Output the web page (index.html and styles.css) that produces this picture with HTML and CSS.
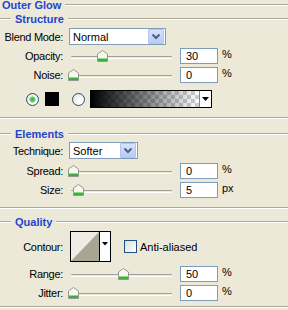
FILE: index.html
```html
<!DOCTYPE html>
<html>

<head>
    <title>Outer Glow</title>
    <link rel="stylesheet" href="styles.css">
</head>

<body>
    <div class="group top">
        <span class="caption">Outer Glow</span>
        <span class="rule"></span>
    </div>

    <!-- Structure -->
    <div class="group" id="structure">
        <span class="lead"></span>
        <span class="caption">Structure</span>
        <span class="rule"></span>
    </div>
    <div class="row" id="blend-row">
        <span class="label">Blend Mode:</span>
        <div class="select wide">
            <span class="value">Normal</span>
            <span class="drop"><svg width="14" height="13"><polyline points="3.5,4.5 7,8 10.5,4.5" fill="none" stroke="#4d6185" stroke-width="2" /></svg></span>
        </div>
    </div>
    <div class="row" id="opacity-row">
        <span class="label">Opacity:</span>
        <div class="slider"><span class="thumb" style="left: 29px"></span></div>
        <span class="field">30</span>
        <span class="unit">%</span>
    </div>
    <div class="row" id="noise-row">
        <span class="label">Noise:</span>
        <div class="slider"><span class="thumb" style="left: 0px"></span></div>
        <span class="field">0</span>
        <span class="unit">%</span>
    </div>
    <div class="row" id="color-row">
        <span class="radio checked"></span>
        <span class="swatch"></span>
        <span class="radio" id="radio-gradient"></span>
        <div class="gradient">
            <span class="ramp"></span>
            <span class="arrow"><svg width="11" height="16"><polygon points="2,6 9,6 5.5,10" fill="#000" /></svg></span>
        </div>
    </div>
    <div class="sep" id="sep-1"></div>

    <!-- Elements -->
    <div class="group" id="elements">
        <span class="lead"></span>
        <span class="caption">Elements</span>
        <span class="rule"></span>
    </div>
    <div class="row" id="technique-row">
        <span class="label">Technique:</span>
        <div class="select narrow">
            <span class="value">Softer</span>
            <span class="drop"><svg width="14" height="13"><polyline points="3.5,4.5 7,8 10.5,4.5" fill="none" stroke="#4d6185" stroke-width="2" /></svg></span>
        </div>
    </div>
    <div class="row" id="spread-row">
        <span class="label">Spread:</span>
        <div class="slider"><span class="thumb" style="left: 0px"></span></div>
        <span class="field">0</span>
        <span class="unit">%</span>
    </div>
    <div class="row" id="size-row">
        <span class="label">Size:</span>
        <div class="slider"><span class="thumb" style="left: 5px"></span></div>
        <span class="field">5</span>
        <span class="unit">px</span>
    </div>
    <div class="sep" id="sep-2"></div>

    <!-- Quality -->
    <div class="group" id="quality">
        <span class="lead"></span>
        <span class="caption">Quality</span>
        <span class="rule"></span>
    </div>
    <div class="row" id="contour-row">
        <span class="label">Contour:</span>
        <div class="contour">
            <svg width="41" height="31">
                <rect x="0.5" y="0.5" width="40" height="30" fill="#eeece4" stroke="#000" />
                <polygon points="1,30 29,1 29,30" fill="#a9a595" />
                <rect x="29" y="1" width="11" height="29" fill="#fff" />
                <line x1="29.5" y1="1" x2="29.5" y2="30" stroke="#000" />
                <polygon points="32,11 38,11 35,14.5" fill="#000" />
            </svg>
        </div>
        <span class="check"></span>
        <span class="check-label">Anti-aliased</span>
    </div>
    <div class="row" id="range-row">
        <span class="label">Range:</span>
        <div class="slider"><span class="thumb" style="left: 50px"></span></div>
        <span class="field">50</span>
        <span class="unit">%</span>
    </div>
    <div class="row" id="jitter-row">
        <span class="label">Jitter:</span>
        <div class="slider"><span class="thumb" style="left: 0px"></span></div>
        <span class="field">0</span>
        <span class="unit">%</span>
    </div>
    <div class="sep" id="sep-3"></div>
</body>

</html>
```

FILE: styles.css
```css
body {
    margin: 0;
    background: #ece9d8;
    font-family: 'Liberation Sans', Arial, sans-serif;
    font-size: 11px;
    color: #000;
    overflow: hidden;
}

/* group headers with an etched line */
.group {
    display: flex;
    align-items: center;
    height: 12px;
}

.group.top {
    height: 10px;
    padding-left: 2px;
}

.caption {
    font-weight: bold;
    color: #1e45ce;
    line-height: 10px;
    margin-right: 4px;
}

.lead {
    width: 11px;
    margin-right: 4px;
}

.lead,
.rule,
.sep {
    height: 0;
    border-top: 1px solid #aca899;
    border-bottom: 1px solid #fff;
}

.rule {
    flex: 1;
}

#structure {
    margin-top: 3px;
}

#sep-1 {
    margin-top: 9px;
}

#elements {
    margin-top: 9px;
}

#sep-2 {
    margin-top: 9px;
}

#quality {
    margin-top: 7px;
}

#sep-3 {
    margin-top: 5px;
}

/* rows */
.row {
    display: flex;
    align-items: center;
    height: 16px;
    margin-top: 3px;
}

.label {
    width: 63px;
    text-align: right;
    letter-spacing: -0.3px;
    flex: none;
}

#blend-row {
    height: 17px;
    margin-top: 3px;
}

#color-row {
    height: 18px;
    margin-top: 7px;
    padding-left: 26px;
}

#technique-row {
    height: 17px;
    margin-top: 2px;
}

#spread-row {
    margin-top: 4px;
}

#contour-row {
    height: 31px;
    margin-top: 3px;
}

#range-row {
    margin-top: 4px;
}

/* dropdowns */
.select {
    display: flex;
    align-items: center;
    height: 15px;
    margin-left: 6px;
    background: #fff;
    border: 1px solid #7f9db9;
}

.select.wide {
    width: 95px;
}

.select.narrow {
    width: 67px;
}

.select .value {
    flex: 1;
    padding-left: 3px;
}

.select .drop {
    width: 14px;
    height: 13px;
    margin-right: 1px;
    background: linear-gradient(#d6e2fd, #b8cbf7);
    border: 1px solid #b1c5f3;
    border-radius: 1px;
}

.select .drop svg {
    display: block;
}

/* sliders */
.slider {
    position: relative;
    width: 104px;
    height: 12px;
    margin-left: 5px;
    flex: none;
}

.slider::before {
    content: "";
    position: absolute;
    left: 3px;
    right: 0;
    top: 6px;
    height: 1px;
    border-top: 1px solid #a3a197;
    border-bottom: 1px solid #fff;
    border-radius: 1px;
}

.thumb {
    position: absolute;
    top: 0;
    width: 11px;
    height: 12px;
    background: url("data:image/svg+xml;utf8,<svg xmlns='http://www.w3.org/2000/svg' width='11' height='12'><path d='M0.5 4 L5.5 0.5 L10.5 4 V11.5 H0.5 Z' fill='%23f7f7f2' stroke='%23939a8f'/><rect x='1' y='9' width='9' height='2' fill='%2336b13a'/><rect x='1' y='8' width='9' height='1' fill='%2393d88f'/></svg>");
}

.field {
    width: 31px;
    height: 14px;
    line-height: 14px;
    margin-left: 8px;
    padding-left: 5px;
    background: #fff;
    border: 1px solid #7f9db9;
    flex: none;
}

.unit {
    margin-left: 4px;
    align-self: flex-start;
    line-height: 12px;
}

/* color / gradient choice */
.radio {
    width: 11px;
    height: 11px;
    border: 1px solid #1c5180;
    border-radius: 50%;
    background: radial-gradient(circle at 65% 65%, #fff 20%, #dcdcd7 100%);
    flex: none;
}

.radio.checked {
    background: radial-gradient(circle, #35b33a 0, #55c95a 2px, #a6e0a6 3px, transparent 3.5px),
        radial-gradient(circle at 65% 65%, #fff 20%, #dcdcd7 100%);
}

.swatch {
    width: 14px;
    height: 14px;
    margin-left: 6px;
    background: #000;
}

#radio-gradient {
    margin-left: 13px;
}

.gradient {
    display: flex;
    width: 120px;
    height: 16px;
    margin-left: 5px;
    border: 1px solid #000;
}

.ramp {
    flex: 1;
    background: linear-gradient(to right, #000, rgba(0, 0, 0, 0)),
        conic-gradient(#cfcfcf 25%, #fff 0 50%, #cfcfcf 0 75%, #fff 0) 0 0 / 8px 8px;
}

.arrow {
    width: 11px;
    background: #fff;
    border-left: 1px solid #888;
}

.arrow svg {
    display: block;
}

/* contour */
.contour {
    height: 31px;
    margin-left: 7px;
}

.contour svg {
    display: block;
}

.check {
    width: 11px;
    height: 11px;
    margin-left: 13px;
    border: 1px solid #1c5180;
    background: linear-gradient(135deg, #dcdcd7, #fff);
    flex: none;
}

.check-label {
    margin-left: 3px;
}
```
